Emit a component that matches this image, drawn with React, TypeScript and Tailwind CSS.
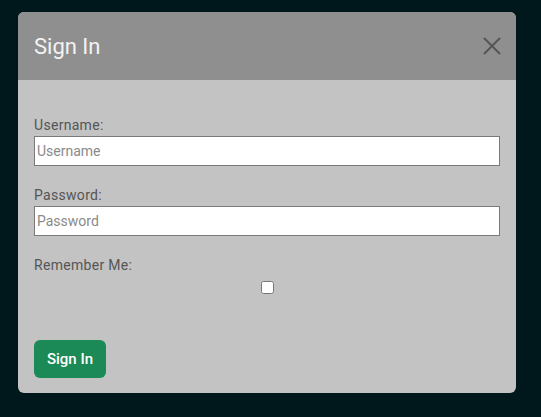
import React from "react";

export default function App() {
  return (
    <div
      className="w-[541px] h-[417px] bg-[#00171b] pt-[12px] pl-[18px]"
      style={{ fontFamily: "Roboto, 'Liberation Sans', sans-serif" }}
    >
      <div className="w-[498px] h-[381px] rounded-[6px] overflow-hidden bg-[#c3c3c3] flex flex-col">
        <div className="h-[68px] bg-[#8f8f8f] flex items-center justify-between pl-[16px] pr-[14px]">
          <h1 className="text-[22px] text-[#f3f3f3] leading-none pt-[2px]">Sign In</h1>
          <button className="text-[#555] w-[20px] h-[20px] flex items-center justify-center">
            <svg width="18" height="18" viewBox="0 0 18 18" stroke="currentColor" strokeWidth="2">
              <path d="M1 1L17 17M17 1L1 17" />
            </svg>
          </button>
        </div>

        <form className="flex flex-col px-[16px] pt-[36px]">
          <label htmlFor="username" className="text-[14px] text-[#555] leading-[18px] tracking-[0.3px]">
            Username:
          </label>
          <input
            id="username"
            type="text"
            placeholder="Username"
            className="mt-[2px] h-[30px] w-[466px] bg-white border border-[#7a7a7a] px-[2px] text-[14px] placeholder:text-[#8a8a8a] outline-none"
          />

          <label htmlFor="password" className="mt-[20px] text-[14px] text-[#555] leading-[18px] tracking-[0.3px]">
            Password:
          </label>
          <input
            id="password"
            type="password"
            placeholder="Password"
            className="mt-[2px] h-[30px] w-[466px] bg-white border border-[#7a7a7a] px-[2px] text-[14px] placeholder:text-[#8a8a8a] outline-none"
          />

          <label htmlFor="remember" className="mt-[20px] text-[14px] text-[#555] leading-[18px] tracking-[0.3px]">
            Remember Me:
          </label>
          <div className="flex justify-center mt-[7px]">
            <input id="remember" type="checkbox" className="w-[13px] h-[13px] m-0" />
          </div>

          <div className="mt-[46px]">
            <button
              type="submit"
              className="w-[72px] h-[38px] bg-[#1b8a56] rounded-[6px] text-white text-[15px] font-medium"
            >
              Sign In
            </button>
          </div>
        </form>
      </div>
    </div>
  );
}
